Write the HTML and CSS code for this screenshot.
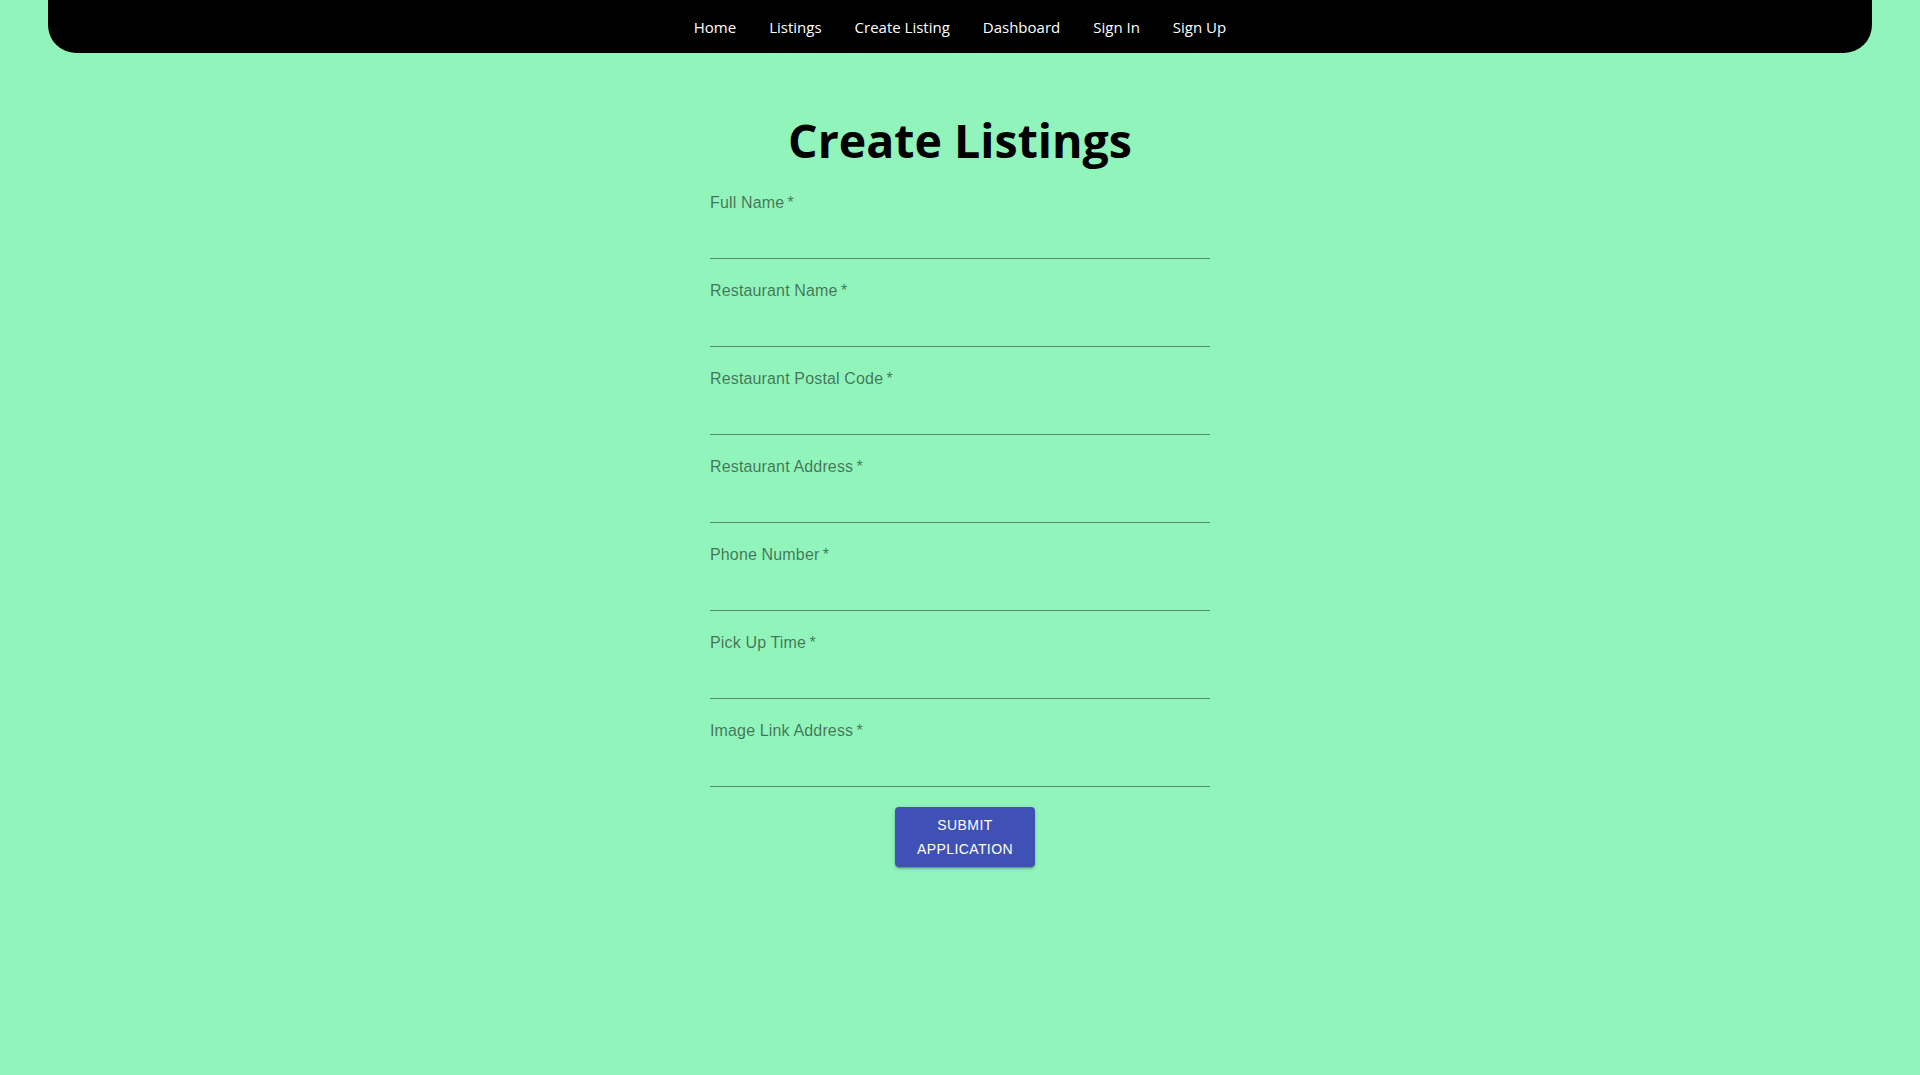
FILE: index.html
```html
<!DOCTYPE html>
<html lang="en">
<head>
<meta charset="utf-8">
<title>Create Listings</title>
<link rel="stylesheet" href="styles.css">
</head>
<body>
<nav class="navbar">
  <a class="nav-link" href="#">Home</a>
  <a class="nav-link" href="#">Listings</a>
  <a class="nav-link" href="#">Create Listing</a>
  <a class="nav-link" href="#">Dashboard</a>
  <a class="nav-link" href="#">Sign In</a>
  <a class="nav-link" href="#">Sign Up</a>
</nav>
<main class="page">
  <h1 class="title">Create Listings</h1>
  <form class="form">
    <div class="field"><label class="field-label">Full Name&thinsp;*</label><div class="field-input"></div></div>
    <div class="field"><label class="field-label">Restaurant Name&thinsp;*</label><div class="field-input"></div></div>
    <div class="field"><label class="field-label">Restaurant Postal Code&thinsp;*</label><div class="field-input"></div></div>
    <div class="field"><label class="field-label">Restaurant Address&thinsp;*</label><div class="field-input"></div></div>
    <div class="field"><label class="field-label">Phone Number&thinsp;*</label><div class="field-input"></div></div>
    <div class="field"><label class="field-label">Pick Up Time&thinsp;*</label><div class="field-input"></div></div>
    <div class="field"><label class="field-label">Image Link Address&thinsp;*</label><div class="field-input"></div></div>
    <div class="actions">
      <button type="button" class="submit-btn">Submit Application</button>
    </div>
  </form>
</main>
</body>
</html>
```

FILE: styles.css
```css
html, body {
  margin: 0;
  padding: 0;
}
body {
  background: #90f4bb;
  min-height: 1075px;
  font-family: "Open Sans", "Noto Sans", sans-serif;
}
.navbar {
  margin: 0 48px;
  height: 53px;
  background: #000;
  border-radius: 0 0 28px 28px;
  display: flex;
  justify-content: center;
  align-items: center;
}
.nav-link {
  color: #fff;
  text-decoration: none;
  font-size: 15px;
  line-height: 20px;
  padding: 0 16.5px;
}
.page {
  display: flex;
  flex-direction: column;
  align-items: center;
  padding-top: 57px;
}
.title {
  margin: 0;
  font-size: 46.5px;
  line-height: 60px;
  font-weight: 700;
  color: #000;
}
.form {
  width: 500px;
  display: flex;
  flex-direction: column;
  gap: 20px;
  margin-top: 21px;
}
.field {
  display: flex;
  flex-direction: column;
  height: 68px;
  border-bottom: 1px solid rgba(0, 0, 0, 0.42);
  box-sizing: border-box;
}
.field-label {
  font-family: "Liberation Sans", Arial, sans-serif;
  font-size: 16px;
  line-height: 23px;
  letter-spacing: 0.15px;
  color: rgba(0, 0, 0, 0.54);
}
.field-input {
  flex: 1;
}
.actions {
  display: flex;
  justify-content: center;
  padding-left: 10px;
}
.submit-btn {
  width: 140px;
  height: 60px;
  padding: 6px 16px;
  border: 0;
  border-radius: 4px;
  background: #3f51b5;
  color: #fff;
  font-family: "Liberation Sans", Arial, sans-serif;
  font-size: 14px;
  font-weight: 400;
  line-height: 24px;
  letter-spacing: 0.4px;
  text-transform: uppercase;
  box-shadow: 0 3px 1px -2px rgba(0,0,0,0.2), 0 2px 2px 0 rgba(0,0,0,0.14), 0 1px 5px 0 rgba(0,0,0,0.12);
  cursor: pointer;
}
```
